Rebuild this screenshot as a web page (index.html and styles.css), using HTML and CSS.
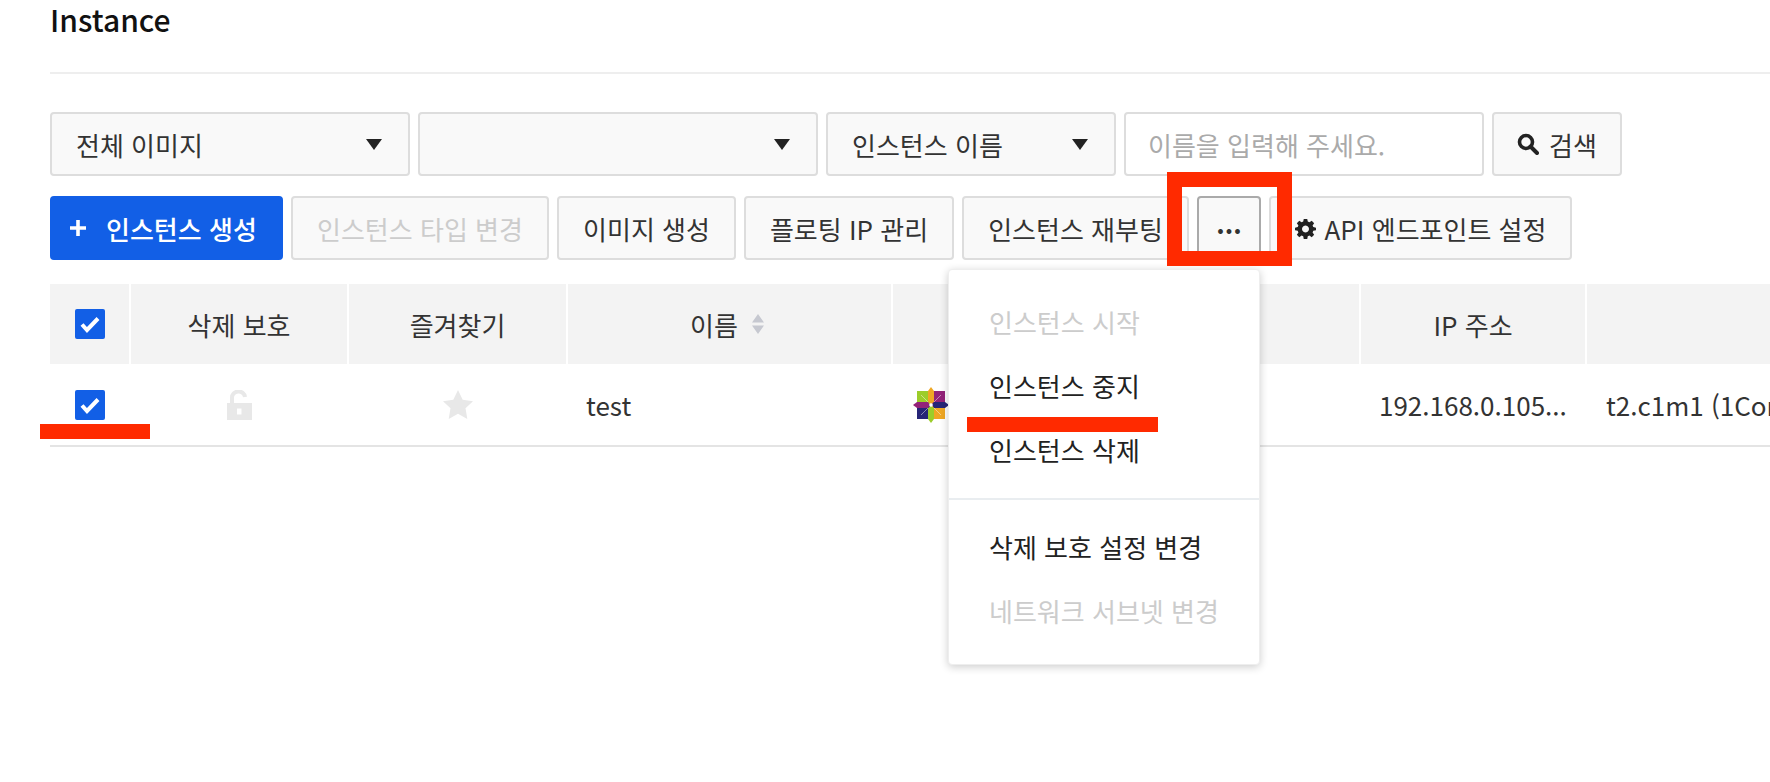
FILE: index.html
```html
<!DOCTYPE html>
<html lang="ko">
<head>
<meta charset="utf-8">
<title>Instance</title>
<link rel="stylesheet" href="styles.css">
</head>
<body>
<main class="page">
  <h1 class="title">Instance</h1>
  <div class="filters">
    <div class="field select w360"><span>전체 이미지</span><i class="caret"></i></div>
    <div class="field select w400"><span></span><i class="caret"></i></div>
    <div class="field select w290"><span>인스턴스 이름</span><i class="caret"></i></div>
    <div class="field input">이름을 입력해 주세요.</div>
    <button class="btn search"><svg class="ico" viewBox="0 0 22 22"><circle cx="9" cy="9" r="6.500" fill="none" stroke="#222" stroke-width="3.600"/><path d="M13.500 13.500l6.500 6.500" stroke="#222" stroke-width="4" stroke-linecap="round"/></svg>검색</button>
  </div>
  <div class="actions">
    <button class="btn primary"><svg class="plus" viewBox="0 0 16 16"><path d="M8 0v16M0 8h16" stroke="#fff" stroke-width="3.600"/></svg>인스턴스 생성</button>
    <button class="btn disabled w258">인스턴스 타입 변경</button>
    <button class="btn w179">이미지 생성</button>
    <button class="btn w210">플로팅 IP 관리</button>
    <button class="btn w227">인스턴스 재부팅</button>
    <button class="btn more">...</button>
    <button class="btn api"><svg class="gear" viewBox="0 0 24 24"><path fill-rule="evenodd" fill="#222" d="M10 1h4l.6 3.100 1.900.8 2.600-1.800 2.800 2.800-1.800 2.600.8 1.900L24 11v3l-3.100.6-.8 1.900 1.800 2.600-2.800 2.800-2.600-1.800-1.900.8L14 24h-4l-.6-3.100-1.900-.8-2.600 1.800-2.800-2.800 1.800-2.600-.8-1.900L0 14v-3l3.100-.6.8-1.900-1.800-2.600 2.800-2.800 2.600 1.800 1.900-.8zM12 8.500a4 4 0 1 0 .01 0z"/></svg>API 엔드포인트 설정</button>
  </div>
  <div class="table">
    <div class="cell head"><span class="check"><svg viewBox="0 0 30 30"><path d="M7 15.500l5 5.500 11-11.500" fill="none" stroke="#fff" stroke-width="4"/></svg></span></div>
    <div class="cell head">삭제 보호</div>
    <div class="cell head">즐겨찾기</div>
    <div class="cell head sorted">이름<svg class="sort" viewBox="0 0 12 20"><path d="M6 0l6 8.500H0zM6 20l-6-8.500h12z" fill="#c6c8d0"/></svg></div>
    <div class="cell head"></div>
    <div class="cell head">IP 주소</div>
    <div class="cell head"></div>
    <div class="cell body"><span class="check"><svg viewBox="0 0 30 30"><path d="M7 15.500l5 5.500 11-11.500" fill="none" stroke="#fff" stroke-width="4"/></svg></span></div>
    <div class="cell body"><svg class="lock" viewBox="0 0 25 30"><path fill-rule="evenodd" fill="#e8e8e8" d="M0 13h25v17H0zM10 18.500v6h4.500v-6z"/><path d="M5 13V8a6.500 6 0 0 1 13-1" fill="none" stroke="#e8e8e8" stroke-width="4"/></svg></div>
    <div class="cell body"><svg class="star" viewBox="0 0 30 29"><path d="M15 0l4.700 9.800L30 11.200l-7.500 7.100L24.300 29 15 23.700 5.700 29l1.800-10.700L0 11.200l10.300-1.400z" fill="#e8e8e8"/></svg></div>
    <div class="cell body left p18">test</div>
    <div class="cell body left p20"><svg class="logo" viewBox="0 0 36 36"><path d="M4 4h13v13H4z" fill="#9ccd2a"/><path d="M19 4h13v13H19z" fill="#932279"/><path d="M19 19h13v13H19z" fill="#efa724"/><path d="M4 19h13v13H4z" fill="#262577"/><path d="M8 8l7 7M28 8l-7 7M28 28l-7-7M8 28l7-7" stroke="#fff" stroke-opacity=".45" stroke-width="1"/><path d="M18 0l3 4v11l-3 2-3-2V4z" fill="#efa724"/><path d="M36 18l-4 3H21l-2-3 2-3h11z" fill="#262577"/><path d="M18 36l-3-4V21l3-2 3 2v11z" fill="#9ccd2a"/><path d="M0 18l4-3h11l2 3-2 3H4z" fill="#932279"/><path d="M16.500 16.500h3v3h-3z" fill="#fff"/></svg></div>
    <div class="cell body left p18 clip">192.168.0.105...</div>
    <div class="cell body left p19 clip">t2.c1m1 (1Core, 1GB)</div>
  </div>
</main>
<div class="menu">
  <ul class="group">
    <li class="off">인스턴스 시작</li>
    <li>인스턴스 중지</li>
    <li>인스턴스 삭제</li>
  </ul>
  <ul class="group second">
    <li>삭제 보호 설정 변경</li>
    <li class="off">네트워크 서브넷 변경</li>
  </ul>
</div>
<div class="mark box"></div>
<div class="mark line-row"></div>
<div class="mark line-menu"></div>
</body>
</html>
```
FILE: styles.css
```css
* { box-sizing: border-box; }
html, body { margin: 0; height: 782px; overflow: hidden; background: #fff; }
body { font-family: "Noto Sans CJK KR", "Noto Sans", sans-serif; color: #333; font-size: 26px; }
.page { width: 1770px; padding: 0 0 0 50px; }
.title { margin: 0; height: 74px; border-bottom: 2px solid #eee; font-size: 30px; font-weight: 500; color: #111; line-height: 38px; }
.filters, .actions { display: flex; gap: 8px; height: 64px; }
.filters { margin-top: 38px; }
.actions { margin-top: 20px; }
.field, .btn { height: 64px; border: 2px solid #ddd; border-radius: 4px; background: #f9f9f9; font: inherit; color: #333; }
.select { display: flex; align-items: center; justify-content: space-between; padding: 0 26px 0 24px; }
.w360 { width: 360px; }
.w400 { width: 400px; }
.w290 { width: 290px; }
.caret { width: 0; height: 0; border-left: 8px solid transparent; border-right: 8px solid transparent; border-top: 11px solid #222; }
.input { width: 360px; padding: 0 22px; display: flex; align-items: center; background: #fff; color: #aaa; }
.btn { display: flex; align-items: center; justify-content: center; padding: 0; white-space: nowrap; }
.search { width: 130px; gap: 10px; }
.ico { width: 22px; height: 22px; }
.primary { width: 233px; background: #125fe6; border-color: #125fe6; color: #fff; font-weight: 500; gap: 20px; justify-content: flex-start; padding-left: 18px; }
.plus { width: 16px; height: 16px; }
.disabled { color: #ccc; }
.w258 { width: 258px; }
.w179 { width: 179px; }
.w210 { width: 210px; }
.w227 { width: 227px; }
.more { width: 64px; border-color: #aaa; font-weight: 700; padding-bottom: 12px; }
.api { width: 303px; gap: 9px; }
.gear { width: 21px; height: 21px; }
.table { display: grid; grid-template-columns: 79px 216px 217px 323px 466px 224px 300px; column-gap: 2px; margin-top: 24px; }
.cell { display: flex; align-items: center; justify-content: center; }
.head { height: 80px; background: #f3f3f3; }
.sorted { padding-right: 5px; }
.body { height: 83px; border-bottom: 2px solid #e4e4e4; margin-right: -2px; padding-right: 2px; }
.left { justify-content: flex-start; }
.p18 { padding-left: 18px; }
.p20 { padding-left: 20px; }
.p19 { padding-left: 19px; }
.clip { white-space: nowrap; overflow: hidden; }
.check { width: 30px; height: 30px; border-radius: 2px; background: #125fe6; display: block; }
.check svg { display: block; width: 30px; height: 30px; }
.sort { width: 12px; height: 20px; margin-left: 14px; }
.lock { width: 25px; height: 30px; }
.star { width: 30px; height: 29px; }
.logo { width: 36px; height: 36px; }
.menu { position: absolute; left: 948px; top: 269px; width: 312px; height: 396px; background: #fff; border: 1px solid #eee; border-radius: 4px; box-shadow: 0 2px 8px rgba(0,0,0,.2); color: #222; }
.group { list-style: none; margin: 0; padding: 20px 0 16px; }
.second { border-top: 2px solid #e9edf0; padding-top: 15px; }
.group li { height: 64px; line-height: 64px; padding-left: 40px; white-space: nowrap; }
.off { color: #ccc; }
.mark { position: absolute; background: #ff2a00; }
.box { left: 1167px; top: 172px; width: 125px; height: 94px; background: transparent; border: 15px solid #ff2a00; }
.line-row { left: 40px; top: 424px; width: 110px; height: 15px; }
.line-menu { left: 967px; top: 417px; width: 191px; height: 15px; }
```
